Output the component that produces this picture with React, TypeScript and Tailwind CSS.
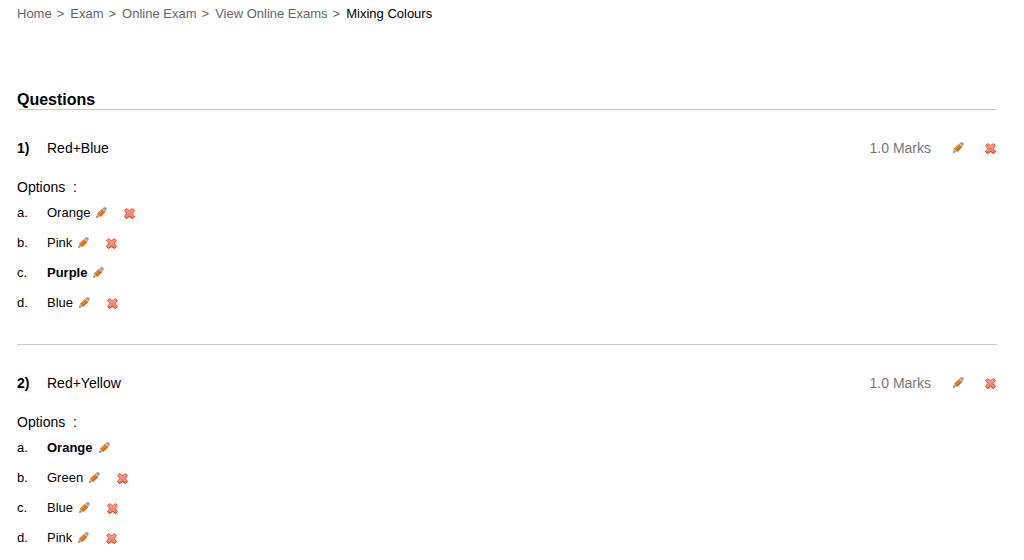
type Option = {
    text: string;
    correct?: boolean;
};

type Question = {
    id: number;
    text: string;
    marks: string;
    options: Option[];
};

const crumbs = ["Home", "Exam", "Online Exam", "View Online Exams"];

const questions: Question[] = [
    {
        id: 1,
        text: "Red+Blue",
        marks: "1.0",
        options: [
            { text: "Orange" },
            { text: "Pink" },
            { text: "Purple", correct: true },
            { text: "Blue" },
        ],
    },
    {
        id: 2,
        text: "Red+Yellow",
        marks: "1.0",
        options: [
            { text: "Orange", correct: true },
            { text: "Green" },
            { text: "Blue" },
            { text: "Pink" },
        ],
    },
];

const PencilIcon = () => (
    <svg className="block w-[11px] h-[11px]" viewBox="0 0 11 11" aria-hidden="true">
        <path d="M6.4 1.5 7.7.2 10 .2 10.6 1 10.6 3 9.4 4.4Z" fill="#8fa5b0" />
        <path d="M5.7 2 6.7 1.2 9.7 4.1 8.9 5.2Z" fill="#d2c6b8" />
        <path d="M1 6.6 5.9 1.9 9.1 5 4.2 9.8 1.6 9.3Z" fill="#e8781a" />
        <path d="M1.8 6.7 6.1 2.6" stroke="#f2953a" strokeWidth="1" />
        <path d="M4 9.4 8.7 4.8" stroke="#b9540a" strokeWidth="1" />
        <path d="M1 6.8 3.9 9.8.3 10.7Z" fill="#c9bba8" />
        <path d="M.1 10.9.7 8.6 2.3 10.3Z" fill="#6f7c82" />
    </svg>
);

const CrossIcon = () => (
    <svg className="block w-[11px] h-[11px]" viewBox="0 0 11 11" aria-hidden="true">
        <path
            d="M2.5.6 5.5 2.7 8.5.6 10.4 2.5 8.3 5.5 10.4 8.5 8.5 10.4 5.5 8.3 2.5 10.4.6 8.5 2.7 5.5.6 2.5Z"
            fill="#fc8a70"
            stroke="#ea5a44"
            strokeWidth="1"
            strokeLinejoin="round"
        />
        <path d="M2.6 2.4 5.5 4.6 8.4 2.4" fill="none" stroke="#ffab96" strokeWidth="1" />
        <path d="M.6 8.5 2.5 10.4 5.5 8.3 8.5 10.4 10.4 8.5" fill="none" stroke="#dc3520" strokeWidth="1" />
    </svg>
);

const QuestionItem = ({ question }: { question: Question }) => (
    <article className="pt-7 pb-[26px] border-b border-[#cccccc]">
        <div className="flex items-center h-5 text-sm">
            <span className="w-[30px] font-bold">{question.id})</span>
            <h3 className="flex-1">{question.text}</h3>
            <span className="text-[#777777]">{question.marks} Marks</span>
            <button type="button" className="ml-[22px] pb-px" aria-label={`Edit question ${question.id}`}>
                <PencilIcon />
            </button>
            <button type="button" className="ml-[21px] mr-px" aria-label={`Delete question ${question.id}`}>
                <CrossIcon />
            </button>
        </div>
        <p className="mt-[18px] text-sm leading-[22px] whitespace-pre">Options  :</p>
        <ol>
            {question.options.map((o, i) => (
                <li key={o.text} className="flex items-center h-[30px] text-[13px]">
                    <span className="w-[30px]">{"abcd"[i]}.</span>
                    <span className={o.correct ? "font-bold" : ""}>{o.text}</span>
                    <button type="button" className="ml-1.5 pb-px" aria-label={`Edit option ${o.text}`}>
                        <PencilIcon />
                    </button>
                    {!o.correct && (
                        <button type="button" className="ml-[17px] pt-px" aria-label={`Delete option ${o.text}`}>
                            <CrossIcon />
                        </button>
                    )}
                </li>
            ))}
        </ol>
    </article>
);

const App = () => {
    return (
        <div className="bg-white text-black pl-[17px] pr-[27px] pt-1 font-['Liberation_Sans',Arial,sans-serif]">
            <nav aria-label="Breadcrumb" className="flex gap-1.5 text-[13px] leading-5 text-[#666666]">
                {crumbs.map((c) => (
                    <span key={c} className="flex gap-[5px]">
                        <a href="#">{c}</a>
                        <span>&gt;</span>
                    </span>
                ))}
                <span className="text-black">Mixing Colours</span>
            </nav>
            <main>
                <h2 className="mt-[67px] text-base leading-[18px] font-bold border-b border-[#cccccc]">Questions</h2>
                {questions.map((q) => (
                    <QuestionItem key={q.id} question={q} />
                ))}
            </main>
        </div>
    );
};

export default App;
